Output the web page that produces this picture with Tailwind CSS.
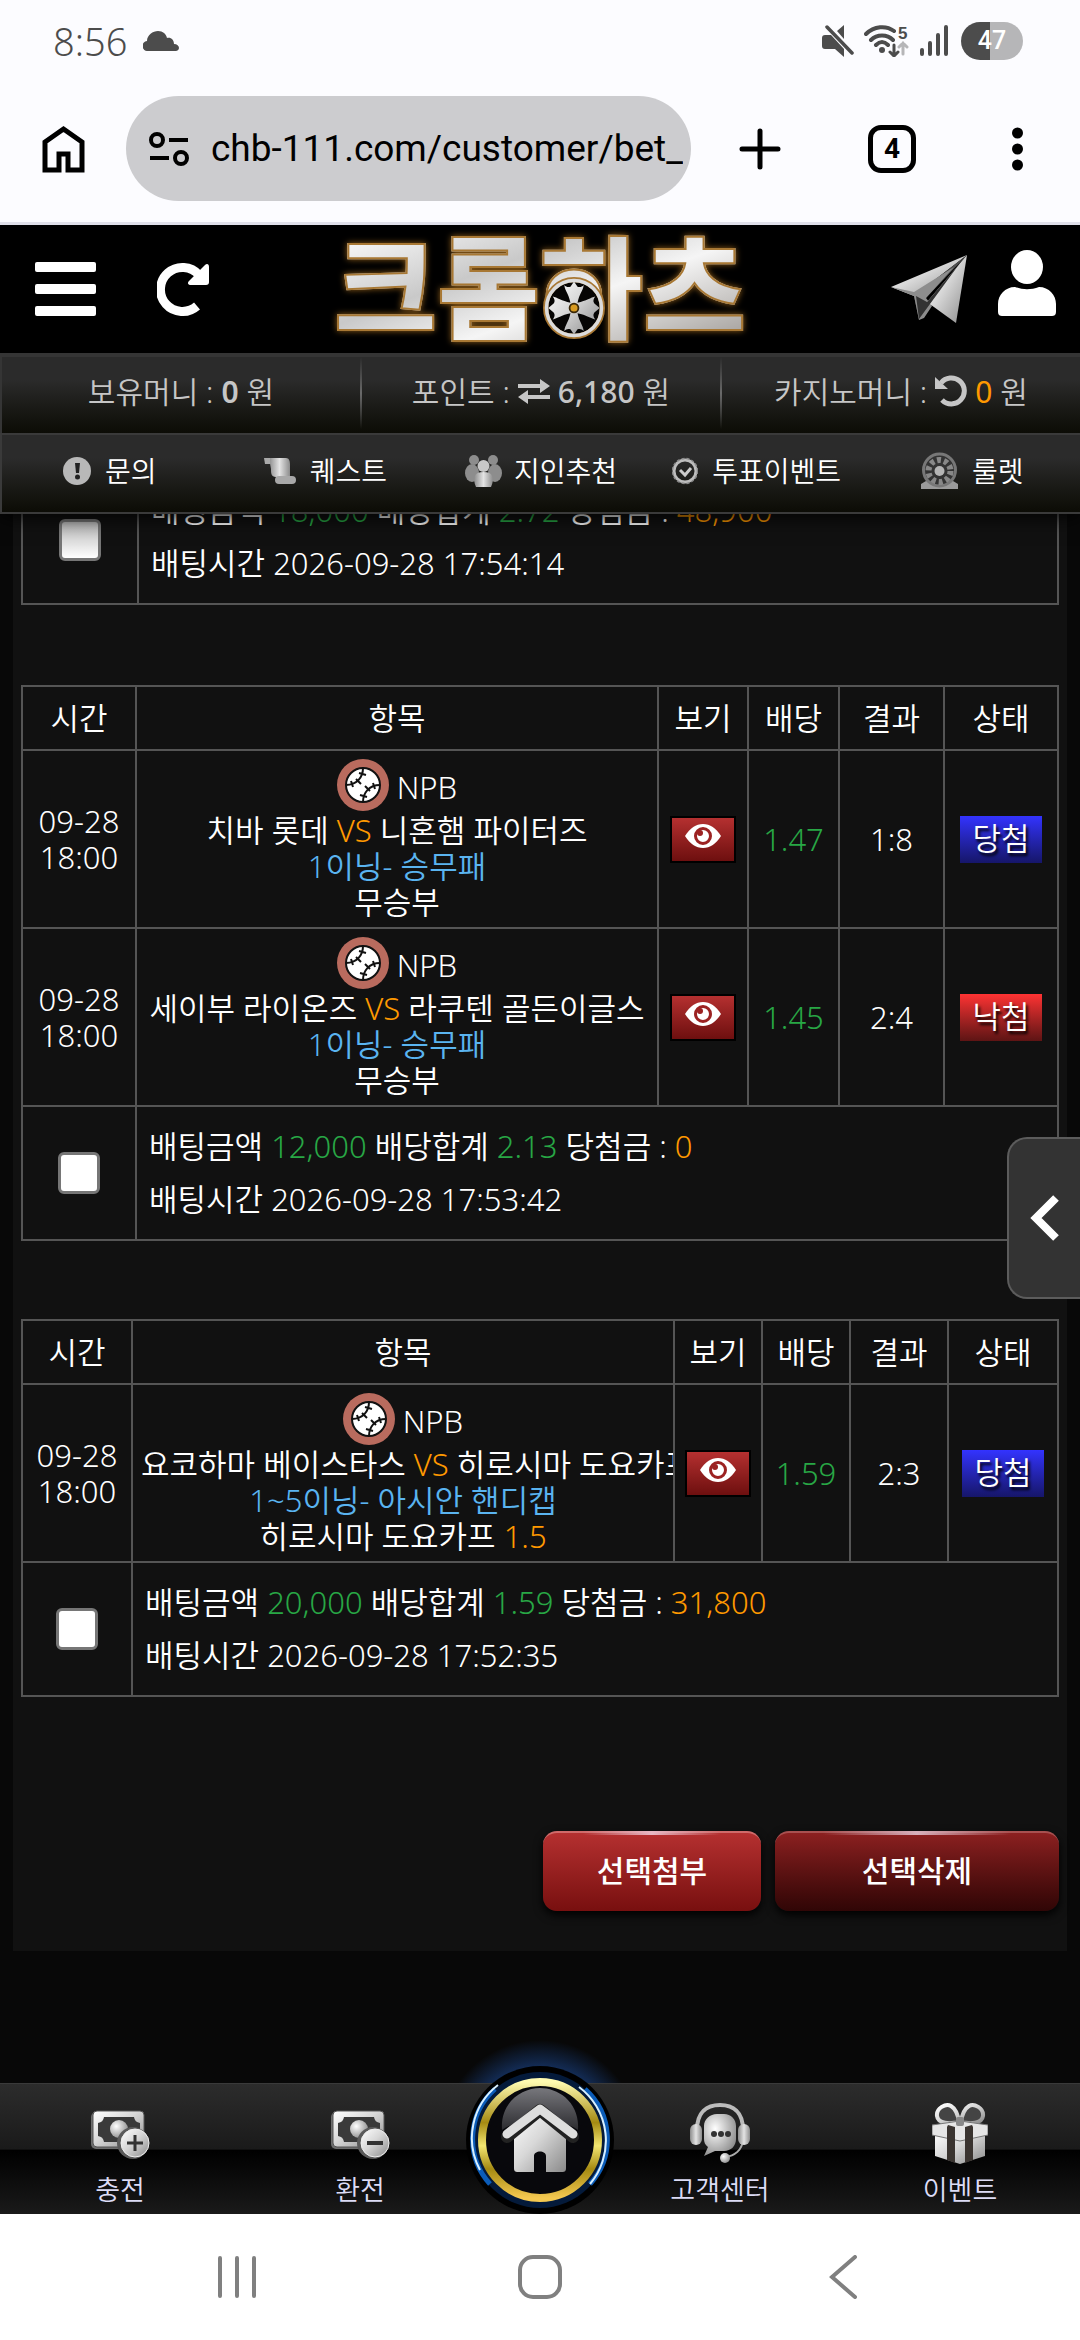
<!DOCTYPE html>
<html lang="ko">
<head>
    <meta charset="UTF-8">
    <meta name="viewport" content="width=device-width, initial-scale=1.0">
    <title>크롬하츠</title>
    <script src="https://cdn.jsdelivr.net/npm/@tailwindcss/browser@4"></script>
</head>
<body class="h-screen flex flex-col overflow-hidden bg-[#080808] text-white font-[350] text-[31px] font-['Noto_Sans','Noto_Sans_CJK_KR',sans-serif]">

<!-- Shared gradients and symbols -->
<svg class="absolute w-0 h-0" aria-hidden="true">
    <defs>
        <linearGradient id="silver" x1="0" y1="0" x2="1" y2="1">
            <stop offset="0" stop-color="#ffffff"/>
            <stop offset=".45" stop-color="#d8d8d8"/>
            <stop offset="1" stop-color="#8a8a8a"/>
        </linearGradient>
        <linearGradient id="steel" x1="0" y1="0" x2="1" y2="0">
            <stop offset="0" stop-color="#8c8c8c"/>
            <stop offset=".5" stop-color="#e4e4e4"/>
            <stop offset="1" stop-color="#8c8c8c"/>
        </linearGradient>
        <linearGradient id="gold" x1="0" y1="0" x2="0" y2="1">
            <stop offset="0" stop-color="#fffbb0"/>
            <stop offset=".35" stop-color="#a58a12"/>
            <stop offset=".55" stop-color="#f3e671"/>
            <stop offset=".75" stop-color="#a58a12"/>
            <stop offset="1" stop-color="#f4c850"/>
        </linearGradient>
        <linearGradient id="gloss" x1="0" y1="0" x2="0" y2="1">
            <stop offset="0" stop-color="#77777c"/>
            <stop offset="1" stop-color="#2c2c30"/>
        </linearGradient>
        <radialGradient id="knob" cx=".35" cy=".35" r=".7">
            <stop offset="0" stop-color="#ffffff"/>
            <stop offset="1" stop-color="#8f8f8f"/>
        </radialGradient>
    </defs>
    <symbol id="baseball" viewBox="0 0 52 52">
        <circle cx="26" cy="26" r="26" fill="#b96b5e"/>
        <circle cx="26" cy="26" r="17" fill="#fff" stroke="#111" stroke-width="2"/>
        <path d="M26 9c0 9-6 17-17 17M43 26c-11 0-17 8-17 17M22 14l7 2M19 20l5 5M14 22l2 6M36 24l2 6M28 27l5 5M23 36l7 2" fill="none" stroke="#111" stroke-width="2"/>
    </symbol>
    <symbol id="eye" viewBox="0 0 36 24">
        <path d="M0 12C5 4 11 0 18 0s13 4 18 12c-5 8-11 12-18 12S5 20 0 12z" fill="#fff"/>
        <circle cx="18" cy="12" r="7.500" fill="#fff" stroke="#9c2222" stroke-width="3"/>
        <circle cx="15" cy="9" r="3" fill="#9c2222"/>
    </symbol>
    <symbol id="banknote" viewBox="0 0 60 50">
        <rect x="1" y="2" width="52" height="37" rx="5" fill="#6d6d6d"/>
        <rect x="3" y="1" width="51" height="36" rx="4" fill="url(#silver)" stroke="#555"/>
        <path d="M14 7h30a7 7 0 0 0 6 6v13a7 7 0 0 0-6 6H14a7 7 0 0 0-6-6V13a7 7 0 0 0 6-6z" fill="#3a3a3a"/>
        <circle cx="29" cy="19" r="9" fill="url(#knob)"/>
        <circle cx="43" cy="33" r="16" fill="#5a5a5a"/>
        <circle cx="45" cy="33" r="14" fill="url(#silver)" stroke="#eee"/>
    </symbol>
</svg>

<!-- Phone status bar -->
<div class="shrink-0 h-[75px] pt-1.5 pl-[53px] pr-[57px] flex items-center bg-[#fcfcff] text-[#4c4c4c]">
    <span class="text-[38px] leading-none">8:56</span>
    <svg class="ml-4 w-9 h-5" viewBox="0 0 36 20" fill="currentColor"><path d="M5 20a5 5 0 0 1-1-10C4 4 10 0 15 0c5 0 8 3 9 7 4-1 7 2 7 6 3 0 5 2 5 4s-2 3-3 3z"/></svg>
    <div class="ml-auto flex items-center gap-2.5">
        <svg class="w-8 h-8" viewBox="0 0 32 32" fill="currentColor">
            <path d="M3 10h6l13 14v8l-9-8H3a3 3 0 0 1-3-3v-8a3 3 0 0 1 3-3zM15 6l7-6v14z"/>
            <path d="M5 2l25 26" stroke="currentColor" stroke-width="3.500" stroke-linecap="round"/>
        </svg>
        <svg class="w-[45px] h-8" viewBox="0 0 45 32" fill="none" stroke="currentColor" stroke-width="4" stroke-linecap="round">
            <path d="M2 9c8-8 20-9 28-3M7 15c6-6 16-6 22 0M12 20c4-4 8-4 12 0"/>
            <circle cx="18" cy="25" r="3" fill="currentColor" stroke="none"/>
            <path d="M30 20v10M26 27l4 4 4-4" stroke-width="3"/>
            <path d="M39 29V18M35 22l4-4 4 4" stroke="#b6b6b8" stroke-width="3"/>
            <text x="34" y="14" font-size="17" font-weight="700" font-family="Liberation Sans" fill="currentColor" stroke="none">5</text>
        </svg>
        <svg class="w-[30px] h-8" viewBox="0 0 30 32" stroke="currentColor" stroke-width="4" stroke-linecap="round"><path d="M3 25v4M11 18v11M19 10v19M27 2v27"/></svg>
        <span class="w-[62px] h-[38px] ml-0.5 rounded-full flex items-center justify-center text-white text-[25px] font-medium leading-none font-['Roboto',sans-serif] bg-linear-to-r from-[#4c4c4c] from-47% to-[#b6b6b8] to-47%">47</span>
    </div>
</div>

<!-- Browser toolbar -->
<div class="shrink-0 relative z-20 h-[150px] border-b-3 border-[#e0e0ea] pl-[42px] pr-[57px] flex items-center bg-[#fcfcff] text-black">
    <button type="button" aria-label="홈">
        <svg class="block w-[43px] h-12" viewBox="0 0 43 48" fill="none" stroke="currentColor" stroke-width="5"><path d="M3 45V17L21.500 4 40 17v28H26V29h-9v16z"/></svg>
    </button>
    <div class="ml-[41px] flex-1 min-w-0 h-[105px] rounded-full bg-[#cccccf] pl-[23px] pr-2 flex items-center">
        <svg class="shrink-0 w-10 h-[34px]" viewBox="0 0 40 34" fill="none" stroke="currentColor" stroke-width="4"><circle cx="8" cy="8" r="6"/><path d="M20 8h19M1 26h19"/><circle cx="32" cy="26" r="6"/></svg>
        <input type="text" aria-label="주소" value="chb-111.com/customer/bet_" class="ml-[22px] flex-1 min-w-0 bg-transparent outline-none text-[37px] font-normal font-['Roboto',sans-serif]">
    </div>
    <button type="button" aria-label="새 탭" class="ml-12">
        <svg class="block w-[42px] h-[42px]" viewBox="0 0 42 42" stroke="currentColor" stroke-width="5" stroke-linecap="round"><path d="M21 3v36M3 21h36"/></svg>
    </button>
    <button type="button" aria-label="탭 목록" class="ml-[87px] w-12 h-12 rounded-[13px] border-5 border-black flex items-center justify-center text-[28px] font-bold leading-none font-['Roboto',sans-serif]">4</button>
    <button type="button" aria-label="더보기" class="ml-24">
        <svg class="block w-[11px] h-11" viewBox="0 0 11 44" fill="currentColor"><circle cx="5.500" cy="6" r="5.500"/><circle cx="5.500" cy="22" r="5.500"/><circle cx="5.500" cy="38" r="5.500"/></svg>
    </button>
</div>

<!-- Site header -->
<header class="shrink-0 relative z-10 shadow-[0_2px_20px_#000]">
    <div class="h-32 bg-black px-6 grid grid-cols-[1fr_auto_1fr] items-center">
        <div class="flex items-center gap-[61px] pl-[11px]">
            <button type="button" aria-label="메뉴">
                <svg class="block w-[61px] h-[54px]" viewBox="0 0 61 54" fill="#fff"><rect width="61" height="10" rx="2"/><rect y="22" width="61" height="10" rx="2"/><rect y="44" width="61" height="10" rx="2"/></svg>
            </button>
            <button type="button" aria-label="새로고침">
                <svg class="block w-[52px] h-[54px]" viewBox="0 0 52 54"><path d="M40 44A22 22 0 1 1 42 13" fill="none" stroke="#fff" stroke-width="9"/><path d="M52 5v15c0 2-1 3-3 3H34c-3 0-4-2-2-4L48 3c2-2 4-1 4 2z" fill="#fff"/></svg>
            </button>
        </div>
        <a href="#" class="relative block pb-3.5 text-[112px] leading-[114px] font-black font-['Noto_Sans_CJK_KR',sans-serif]">
            <span class="text-transparent bg-clip-text bg-[linear-gradient(160deg,#ffffff_10%,#c9c9c9_40%,#f5f5f5_60%,#a8a4a0_90%)] [-webkit-text-stroke:2px_#a87834] drop-shadow-[0_0_3px_#8a5a18]">크롬하츠</span>
            <svg class="absolute left-[209px] top-[52px] size-[62px]" viewBox="0 0 70 70">
                <circle cx="35" cy="35" r="32" fill="#060504" stroke="#a87834" stroke-width="6"/>
                <circle cx="35" cy="35" r="31" fill="none" stroke="#dcdcdc" stroke-width="4"/>
                <path d="M35 5l4 6c3 1 5 0 7-2-1 7-5 10-7 20 10-2 15-6 20-7-2 3-3 5-1 8l6 5-6 5c-2 3-1 5 1 8-5-1-10-5-20-7 2 10 6 13 7 20-2-2-4-3-7-2l-4 6-4-6c-3-1-5 0-7 2 1-7 5-10 7-20-10 2-15 6-20 7 2-3 3-5 1-8l-6-5 6-5c2-3 1-5-1-8 5 1 10 5 20 7-2-10-6-13-7-20 2 2 4 3 7 2z" fill="url(#silver)"/>
                <circle cx="35" cy="35" r="5" fill="#d89a20" stroke="#3a2808" stroke-width="2"/>
            </svg>
        </a>
        <div class="flex items-center justify-end gap-7">
            <a href="#" aria-label="텔레그램">
                <svg class="block w-20 h-[70px]" viewBox="0 0 80 70">
                    <path d="M1 33L77 1 24 42z" fill="url(#silver)"/>
                    <path d="M24 42L77 1 34 46l-5 20z" fill="#4f4f4f"/>
                    <path d="M1 33l23 9 5 24 5-2 8-12-6-8L64 13 24 38z" fill="#8d8d8d"/>
                    <path d="M37 48L77 1 66 69z" fill="url(#silver)"/>
                    <path d="M37 48L70 9 29 65l-3-23" fill="#333"/>
                </svg>
            </a>
            <a href="#" aria-label="내 정보">
                <svg class="block w-[58px] h-[66px] mb-3" viewBox="0 0 58 66" fill="#fff"><ellipse cx="29" cy="17" rx="16" ry="17"/><path d="M17 37c8 3 16 3 24 0 10 0 17 8 17 17v8c0 3-2 4-4 4H4c-2 0-4-1-4-4v-8c0-9 7-17 17-17z"/></svg>
            </a>
        </div>
    </div>

    <!-- Balances -->
    <div class="h-20 pb-1 border-t-4 border-l-2 border-[#353535] bg-linear-to-b from-[#2b2b2b] from-30% to-[#0c0c06] grid grid-cols-[1fr_2px_1fr_2px_1fr] text-[30px] text-[#c6c6c6]">
        <div class="flex items-center justify-center gap-2 pb-1"><span>보유머니 :</span><b class="font-semibold">0</b><span>원</span></div>
        <span class="bg-linear-to-b from-transparent via-[#6a6a6a] to-transparent"></span>
        <div class="flex items-center justify-center gap-2 pb-1"><span>포인트 :</span>
            <svg class="w-8 h-[25px]" viewBox="0 0 32 25" fill="#c6c6c6"><path d="M0 5h22V0l10 7-10 7V9H0zM32 16H10v-5L0 18l10 7v-5h22z"/></svg>
            <b class="font-medium">6,180</b><span>원</span></div>
        <span class="bg-linear-to-b from-transparent via-[#6a6a6a] to-transparent"></span>
        <div class="flex items-center justify-center gap-2 pb-1"><span>카지노머니 :</span>
            <svg class="w-8 h-8" viewBox="0 0 32 32"><path d="M6 8a13 13 0 1 1 1 17" fill="none" stroke="#c6c6c6" stroke-width="5"/><path d="M0 2l13 12H0z" fill="#c6c6c6"/></svg>
            <b class="font-normal text-[#f90]">0</b><span>원</span></div>
    </div>

    <!-- Shortcuts -->
    <nav class="h-[81px] pb-1.5 border-y-2 border-l-2 border-[#3a3a3a] bg-linear-to-b from-[#2b2b2b] from-30% to-[#0c0c06] grid grid-cols-5 text-[28px]">
        <a href="#" class="flex items-center justify-center gap-3.5">
            <svg class="w-7 h-7" viewBox="0 0 28 28"><circle cx="14" cy="14" r="14" fill="#b8b8b8"/><path d="M12 6h5l-1 10h-3z" fill="#222"/><circle cx="14.500" cy="20" r="2.500" fill="#222"/></svg>문의</a>
        <a href="#" class="flex items-center justify-center gap-3.5">
            <svg class="w-8 h-7" viewBox="0 0 32 28"><path d="M5 1h17c3 0 4 3 4 6v13H12c-5 0-5-4-5-8z" fill="url(#steel)"/><path d="M0 1h6v6H1z" fill="#aaa"/><rect x="11" y="19" width="21" height="8" rx="4" fill="#a8a8a8"/></svg>퀘스트</a>
        <a href="#" class="flex items-center justify-center gap-3">
            <svg class="w-[37px] h-8" viewBox="0 0 37 32"><g fill="#8d8d8d"><circle cx="9" cy="5" r="5"/><circle cx="28" cy="5" r="5"/><ellipse cx="7" cy="18" rx="7" ry="9"/><ellipse cx="30" cy="18" rx="7" ry="9"/></g><circle cx="18.500" cy="11" r="6" fill="#c8c8c8"/><path d="M11 32c-4-9-2-15 7.500-15S30 23 26 32z" fill="url(#steel)"/></svg>지인추천</a>
        <a href="#" class="flex items-center justify-center gap-3.5">
            <svg class="w-[26px] h-7" viewBox="0 0 26 28" fill="none"><circle cx="13" cy="14" r="11" stroke="#bdbdbd" stroke-width="3"/><circle cx="13" cy="14" r="12.500" stroke="#8a8a8a" stroke-width="1.500" stroke-dasharray="3 2"/><path d="M8 13l5 5 6-7" stroke="#ccc" stroke-width="3"/></svg>투표이벤트</a>
        <a href="#" class="flex items-center justify-center gap-3.5">
            <svg class="w-[37px] h-[37px]" viewBox="0 0 37 37"><path d="M0 37v-5l5-3h27l5 3v5z" fill="#9a9a9a"/><circle cx="18.500" cy="18" r="16" fill="#333" stroke="#777" stroke-width="3"/><circle cx="18.500" cy="19" r="11" fill="none" stroke="#888" stroke-width="6" stroke-dasharray="4 3"/><circle cx="18.500" cy="19" r="5" fill="#b5b5b5"/></svg>룰렛</a>
    </nav>
</header>

<!-- Betting history, scrolled to its end -->
<main class="flex-1 min-h-0 overflow-hidden flex flex-col justify-end">
    <section class="shrink-0 mx-[13px] px-2 pb-10 bg-[#111]">
        <table class="w-full table-fixed border-collapse border-2 border-[#555]">
            <colgroup><col class="w-[116px]"><col></colgroup>
            <tbody>
            <tr class="h-[134px]">
                <td class="border-2 border-[#555] text-center"><input type="checkbox" aria-label="17:54:14 배팅 선택" class="appearance-none align-middle size-[42px] rounded-md border-3 border-[#767676] bg-linear-to-b from-[#b8b8b8] to-white"></td>
                <td class="border-2 border-[#555] pl-3 leading-[53px]">배팅금액 <span class="text-[#28a745]">18,000</span> 배당합계 <span class="text-[#28a745]">2.72</span> 당첨금 : <span class="text-[#f90]">48,900</span><br>배팅시간 2026-09-28 17:54:14</td>
            </tr>
            </tbody>
        </table>

        <table class="mt-20 w-full table-fixed border-collapse border-2 border-[#555] text-center leading-9">
            <colgroup><col class="w-[114px]"><col><col class="w-[90px]"><col class="w-[91px]"><col class="w-[105px]"><col class="w-[114px]"></colgroup>
            <thead>
            <tr class="h-16">
                <th class="border-2 border-[#555] font-[350]">시간</th>
                <th class="border-2 border-[#555] font-[350]">항목</th>
                <th class="border-2 border-[#555] font-[350]">보기</th>
                <th class="border-2 border-[#555] font-[350]">배당</th>
                <th class="border-2 border-[#555] font-[350]">결과</th>
                <th class="border-2 border-[#555] font-[350]">상태</th>
            </tr>
            </thead>
            <tbody>
            <tr class="h-[178px]">
                <td class="border-2 border-[#555]">09-28<br>18:00</td>
                <td class="border-2 border-[#555] px-2 overflow-hidden whitespace-nowrap">
                    <div class="h-[54px] flex items-center justify-center gap-2"><svg class="size-[52px]"><use href="#baseball"/></svg><span class="pt-1">NPB</span></div>
                    치바 롯데 <span class="text-[#f90]">VS</span> 니혼햄 파이터즈<br>
                    <span class="text-[#5ab4f0]">1이닝- 승무패</span><br>
                    무승부
                </td>
                <td class="border-2 border-[#555]"><button type="button" aria-label="경기 보기" class="align-middle w-[66px] h-[47px] pb-1.5 border-2 border-black bg-linear-to-b from-[#b53030] to-[#6e0f0f] inline-flex items-center justify-center"><svg class="w-9 h-6"><use href="#eye"/></svg></button></td>
                <td class="border-2 border-[#555] text-[#28a745]">1.47</td>
                <td class="border-2 border-[#555]">1:8</td>
                <td class="border-2 border-[#555]"><span class="align-middle inline-block w-[82px] h-[47px] leading-[45px] bg-linear-to-b from-[#3333ff] to-[#16166a] text-shadow-[2px_3px_3px_#000]">당첨</span></td>
            </tr>
            <tr class="h-[178px]">
                <td class="border-2 border-[#555]">09-28<br>18:00</td>
                <td class="border-2 border-[#555] px-2 overflow-hidden whitespace-nowrap">
                    <div class="h-[54px] flex items-center justify-center gap-2"><svg class="size-[52px]"><use href="#baseball"/></svg><span class="pt-1">NPB</span></div>
                    세이부 라이온즈 <span class="text-[#f90]">VS</span> 라쿠텐 골든이글스<br>
                    <span class="text-[#5ab4f0]">1이닝- 승무패</span><br>
                    무승부
                </td>
                <td class="border-2 border-[#555]"><button type="button" aria-label="경기 보기" class="align-middle w-[66px] h-[47px] pb-1.5 border-2 border-black bg-linear-to-b from-[#b53030] to-[#6e0f0f] inline-flex items-center justify-center"><svg class="w-9 h-6"><use href="#eye"/></svg></button></td>
                <td class="border-2 border-[#555] text-[#28a745]">1.45</td>
                <td class="border-2 border-[#555]">2:4</td>
                <td class="border-2 border-[#555]"><span class="align-middle inline-block w-[82px] h-[47px] leading-[45px] bg-linear-to-b from-[#ff3333] to-[#5e1414] text-shadow-[2px_3px_3px_#000]">낙첨</span></td>
            </tr>
            <tr class="h-[134px]">
                <td class="border-2 border-[#555]"><input type="checkbox" aria-label="17:53:42 배팅 선택" class="appearance-none align-middle size-[42px] rounded-md border-3 border-[#767676] bg-white"></td>
                <td colspan="5" class="border-2 border-[#555] pl-3 text-left leading-[53px]">배팅금액 <span class="text-[#28a745]">12,000</span> 배당합계 <span class="text-[#28a745]">2.13</span> 당첨금 : <span class="text-[#f90]">0</span><br>배팅시간 2026-09-28 17:53:42</td>
            </tr>
            </tbody>
        </table>

        <table class="mt-[78px] w-full table-fixed border-collapse border-2 border-[#555] text-center leading-9">
            <colgroup><col class="w-[110px]"><col><col class="w-[88px]"><col class="w-[88px]"><col class="w-[98px]"><col class="w-[110px]"></colgroup>
            <thead>
            <tr class="h-16">
                <th class="border-2 border-[#555] font-[350]">시간</th>
                <th class="border-2 border-[#555] font-[350]">항목</th>
                <th class="border-2 border-[#555] font-[350]">보기</th>
                <th class="border-2 border-[#555] font-[350]">배당</th>
                <th class="border-2 border-[#555] font-[350]">결과</th>
                <th class="border-2 border-[#555] font-[350]">상태</th>
            </tr>
            </thead>
            <tbody>
            <tr class="h-[178px]">
                <td class="border-2 border-[#555]">09-28<br>18:00</td>
                <td class="border-2 border-[#555] px-2 overflow-hidden whitespace-nowrap">
                    <div class="h-[54px] flex items-center justify-center gap-2"><svg class="size-[52px]"><use href="#baseball"/></svg><span class="pt-1">NPB</span></div>
                    요코하마 베이스타스 <span class="text-[#f90]">VS</span> 히로시마 도요카프<br>
                    <span class="text-[#5ab4f0]">1~5이닝- 아시안 핸디캡</span><br>
                    히로시마 도요카프 <span class="text-[#f90]">1.5</span>
                </td>
                <td class="border-2 border-[#555]"><button type="button" aria-label="경기 보기" class="align-middle w-[66px] h-[47px] pb-1.5 border-2 border-black bg-linear-to-b from-[#b53030] to-[#6e0f0f] inline-flex items-center justify-center"><svg class="w-9 h-6"><use href="#eye"/></svg></button></td>
                <td class="border-2 border-[#555] text-[#28a745]">1.59</td>
                <td class="border-2 border-[#555]">2:3</td>
                <td class="border-2 border-[#555]"><span class="align-middle inline-block w-[82px] h-[47px] leading-[45px] bg-linear-to-b from-[#3333ff] to-[#16166a] text-shadow-[2px_3px_3px_#000]">당첨</span></td>
            </tr>
            <tr class="h-[134px]">
                <td class="border-2 border-[#555]"><input type="checkbox" aria-label="17:52:35 배팅 선택" class="appearance-none align-middle size-[42px] rounded-md border-3 border-[#767676] bg-white"></td>
                <td colspan="5" class="border-2 border-[#555] pl-3 text-left leading-[53px]">배팅금액 <span class="text-[#28a745]">20,000</span> 배당합계 <span class="text-[#28a745]">1.59</span> 당첨금 : <span class="text-[#f90]">31,800</span><br>배팅시간 2026-09-28 17:52:35</td>
            </tr>
            </tbody>
        </table>

        <div class="mt-[134px] flex justify-end gap-3.5 text-[30px] font-medium">
            <button type="button" class="w-[218px] h-20 rounded-[14px] border-t-2 border-[#d06a6a] bg-linear-to-b from-[#b53030] to-[#780f0f] shadow-[0_4px_10px_#000] relative pb-1">
                <span class="absolute -top-0.5 inset-x-10 h-1 bg-linear-to-r from-transparent via-[#e8b8c4] to-transparent"></span>선택첨부</button>
            <button type="button" class="w-[284px] h-20 rounded-[14px] border-t-2 border-[#a85050] bg-linear-to-b from-[#8c2020] to-[#300606] shadow-[0_4px_10px_#000] relative pb-1">
                <span class="absolute -top-0.5 inset-x-12 h-1 bg-linear-to-r from-transparent via-[#d8b0bc] to-transparent"></span>선택삭제</button>
        </div>
    </section>
    <div class="shrink-0 h-[132px]"></div>
</main>

<!-- Slide-out handle -->
<button type="button" aria-label="사이드 메뉴 열기" class="fixed z-20 right-0 top-[1137px] w-[73px] h-[162px] rounded-l-[20px] border-2 border-r-0 border-[#5c5c5c] bg-[#333] flex items-center pl-5">
    <svg class="w-[30px] h-[46px]" viewBox="0 0 30 46" fill="none" stroke="#fff" stroke-width="8"><path d="M27 3L7 23l20 20"/></svg>
</button>

<!-- Bottom menu -->
<nav class="shrink-0 relative h-[131px] border-t border-[#3a3a3a] bg-[linear-gradient(#2c2c2c,#1a1a1a_50%,#000_51%,#1a1a1a)] grid grid-cols-[2fr_2fr_1fr_2fr_2fr] text-[27px] text-[#dcdcf6]">
    <a href="#" class="flex flex-col items-center justify-end pb-1">
        <svg class="w-[60px] h-[50px] mb-2.5" viewBox="0 0 60 50"><use href="#banknote"/><path d="M45 25v16M37 33h16" stroke="#333" stroke-width="3"/></svg>
        <span class="leading-10">충전</span></a>
    <a href="#" class="flex flex-col items-center justify-end pb-1">
        <svg class="w-[60px] h-[50px] mb-2.5" viewBox="0 0 60 50"><use href="#banknote"/><path d="M37 33h16" stroke="#333" stroke-width="4"/></svg>
        <span class="leading-10">환전</span></a>
    <a href="#" aria-label="홈으로" class="relative">
        <svg class="absolute left-1/2 -top-6 -ml-20 w-40 h-40 overflow-visible" viewBox="0 0 160 160">
            <defs>
                <radialGradient id="glow" gradientUnits="userSpaceOnUse" cx="80" cy="80" r="100"><stop offset=".7" stop-color="#1d4c9a" stop-opacity=".6"/><stop offset="1" stop-color="#1d4c9a" stop-opacity="0"/></radialGradient>
            </defs>
            <path d="M-20 23C-10 0 20-20 80-20S170 0 180 23z" fill="url(#glow)"/>
            <circle cx="80" cy="80" r="74" fill="#000"/>
            <circle cx="80" cy="80" r="68" fill="#041a3a"/>
            <path d="M35 29A67 67 0 0 0 30 124M125 29A67 67 0 0 1 130 124" fill="none" stroke="#0b5cb8" stroke-width="5"/>
            <path d="M38 25A67 67 0 0 0 20 110M119 27A67 67 0 0 1 130 124" fill="none" stroke="#d8f0ff" stroke-width="2"/>
            <circle cx="80" cy="80" r="58" fill="#08080c" stroke="url(#gold)" stroke-width="8"/>
            <path d="M42 70C40 42 62 28 80 28s40 14 38 42c-20-14-56-14-76 0z" fill="url(#gloss)"/>
            <path d="M80 52L54 74v34c0 3 1 4 4 4h16V96c0-6 12-6 12 0v16h16c3 0 4-1 4-4V74z" fill="url(#silver)"/>
            <path d="M47 77l33-27 33 27" fill="none" stroke="#222" stroke-width="12" stroke-linecap="round" stroke-linejoin="round"/>
            <path d="M47 74l33-25 33 25" fill="none" stroke="#dedede" stroke-width="9" stroke-linecap="round" stroke-linejoin="round"/>
        </svg>
    </a>
    <a href="#" class="flex flex-col items-center justify-end pb-1">
        <svg class="w-[60px] h-[62px] mb-1.5" viewBox="0 0 60 62">
            <path d="M7 28C7 10 17 3 30 3s23 7 23 25" fill="none" stroke="#bbb" stroke-width="4"/>
            <path d="M53 38c-1 10-8 16-18 17" fill="none" stroke="#aaa" stroke-width="2"/>
            <path d="M27 12h7c7 0 12 5 12 12v13c0 7-5 12-12 12h-9l-11 5 4-9c-3-2-4-5-4-8V24c0-7 6-12 13-12z" fill="url(#knob)"/>
            <rect x="0" y="22" width="12" height="21" rx="6" fill="url(#steel)"/><rect x="48" y="22" width="12" height="21" rx="6" fill="url(#steel)"/>
            <circle cx="24" cy="32" r="3" fill="#333"/><circle cx="31" cy="32" r="3" fill="#333"/><circle cx="38" cy="32" r="3" fill="#333"/>
            <circle cx="35" cy="56" r="5" fill="url(#knob)"/>
        </svg>
        <span class="leading-10">고객센터</span></a>
    <a href="#" class="flex flex-col items-center justify-end pb-1">
        <svg class="w-14 h-[62px] mb-1.5" viewBox="0 0 56 62">
            <path d="M27 20C18 22 6 22 5 14S14 1 19 4s7 9 8 16zM29 20c9 2 21 2 22-6S42 1 37 4s-7 9-8 16z" fill="#444" stroke="url(#silver)" stroke-width="4"/>
            <path d="M3 30l25 8 25-8v24l-25 8-25-8z" fill="url(#silver)"/>
            <path d="M0 23l28-4 28 4v10l-28 6-28-6z" fill="#e6e6e6" stroke="#777"/>
            <path d="M16 23l7 2v36l-8-3V25zM40 23l-7 2v36l8-3V25z" fill="#3a3430"/>
            <rect x="24" y="15" width="8" height="9" rx="2" fill="#888"/>
        </svg>
        <span class="leading-10">이벤트</span></a>
</nav>

<!-- Phone navigation -->
<div class="shrink-0 h-[126px] bg-white text-[#808080] flex items-center justify-around px-[86px]">
    <button type="button" aria-label="최근 앱" class="flex-1 flex justify-center"><svg class="w-[38px] h-[42px]" viewBox="0 0 38 42" stroke="currentColor" stroke-width="4" stroke-linecap="round"><path d="M2 2v38M19 2v38M36 2v38"/></svg></button>
    <button type="button" aria-label="홈 화면" class="flex-1 flex justify-center"><span class="block w-11 h-11 rounded-[15px] border-4 border-current"></span></button>
    <button type="button" aria-label="뒤로" class="flex-1 flex justify-center"><svg class="w-7 h-11" viewBox="0 0 28 44" fill="none" stroke="currentColor" stroke-width="4" stroke-linecap="round"><path d="M26 2L3 22l23 20"/></svg></button>
</div>
</body>
</html>
